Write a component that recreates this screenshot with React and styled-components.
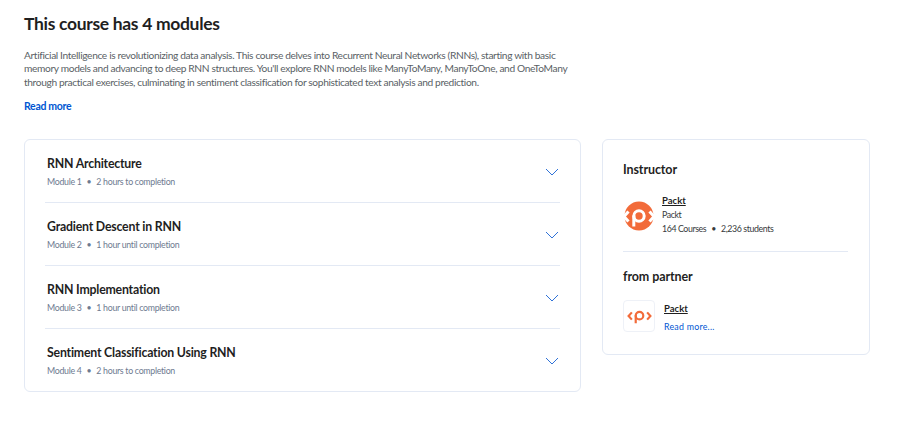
import React from 'react'
import styled, { createGlobalStyle } from 'styled-components'

const GlobalStyle = createGlobalStyle`
  html, body {
    margin: 0;
    padding: 0;
    background: #fff;
    font-family: Lato, "Noto Sans", sans-serif;
    color: #1f1f1f;
  }
`

const Page = styled.div`
  width: 900px;
  height: 423px;
  overflow: hidden;
  box-sizing: border-box;
  padding: 12px 30px 0 24px;
`

const Heading = styled.h2`
  margin: 0;
  font-size: 17.5px;
  line-height: 24px;
  font-weight: 700;
  letter-spacing: -0.32px;
  color: #1f1f1f;
`

const Summary = styled.p`
  margin: 13px 0 0;
  width: 552px;
  font-size: 10.2px;
  line-height: 13.4px;
  letter-spacing: -0.36px;
  color: #5a5f66;
`

const ReadMore = styled.a`
  display: block;
  margin-top: 10px;
  font-size: 10.5px;
  line-height: 14px;
  font-weight: 700;
  letter-spacing: -0.3px;
  color: #0056d2;
`

const Columns = styled.div`
  display: flex;
  align-items: flex-start;
  gap: 21px;
  margin-top: 26px;
`

const Card = styled.section`
  box-sizing: border-box;
  background: #fff;
  border: 1px solid #e3e9f4;
  border-radius: 6px;
`

const ModuleCard = styled(Card)`
  width: 557px;
  height: 253px;
  padding: 0 20px;
`

const ModuleRow = styled.div`
  display: flex;
  align-items: center;
  justify-content: space-between;
  height: 63px;
  box-sizing: border-box;
  padding: 2px 0 0 2px;
  border-bottom: 1px solid ${p => (p.$last ? 'transparent' : '#e3e9f4')};
`

const ModuleTitle = styled.div`
  font-size: 12.3px;
  line-height: 18px;
  font-weight: 700;
  letter-spacing: -0.2px;
  color: #1f1f1f;
`

const ModuleMeta = styled.div`
  margin-top: 2px;
  font-size: 8.8px;
  line-height: 14px;
  letter-spacing: -0.3px;
  color: #6e7a90;
`

const Dot = styled.span`
  margin: 0 5px;
`

const Chevron = styled.svg`
  width: 14px;
  height: 8px;
  margin: 0 1px 1px 0;
  fill: none;
  stroke: #2f72d8;
  stroke-width: 1;
`

const SideCard = styled(Card)`
  width: 268px;
  height: 216px;
  padding: 21px 21px 0 20px;
`

const SideTitle = styled.h3`
  margin: 0;
  font-size: 12.5px;
  line-height: 18px;
  font-weight: 700;
  letter-spacing: -0.1px;
  color: #1f1f1f;
`

const Person = styled.div`
  display: flex;
  gap: 7px;
  margin-top: 15px;
  padding-bottom: 16px;
  border-bottom: 1px solid #e3e9f4;
`

const Avatar = styled.svg`
  flex: none;
  width: 32px;
  height: 32px;
  margin-top: 6px;
`

const PersonName = styled.a`
  display: block;
  font-size: 9.5px;
  line-height: 14px;
  font-weight: 700;
  color: #1f1f1f;
  text-decoration: underline;
`

const PersonLine = styled.div`
  font-size: 8.8px;
  line-height: 13.5px;
  letter-spacing: -0.4px;
  color: #373a3c;
`

const PartnerHeading = styled(SideTitle)`
  margin-top: 16px;
`

const Partner = styled.div`
  display: flex;
  gap: 9px;
  margin-top: 14px;
`

const PartnerLogo = styled.div`
  flex: none;
  display: flex;
  align-items: center;
  justify-content: center;
  box-sizing: border-box;
  width: 32px;
  height: 32px;
  border: 1px solid #eef1f7;
  border-radius: 4px;
`

const PartnerMark = styled.svg`
  width: 25px;
  height: 16px;
`

const PartnerText = styled.div`
  padding-top: 2px;
`

const PartnerLink = styled.a`
  display: block;
  margin-top: 4px;
  font-size: 8.8px;
  line-height: 14px;
  letter-spacing: 0.25px;
  color: #0056d2;
`

const LogoMark = ({ color }) => (
  <g fill="none" stroke={color} strokeWidth="3">
    <path d="M6.5 6 L2 11 L6.5 16" />
    <path d="M27.5 6 L32 11 L27.5 16" />
    <circle cx="17" cy="10.5" r="5.2" />
    <path d="M11.8 10 V21" />
  </g>
)

const modules = [
  { title: 'RNN Architecture', meta: 'Module 1', time: '2 hours to completion' },
  { title: 'Gradient Descent in RNN', meta: 'Module 2', time: '1 hour until completion' },
  { title: 'RNN Implementation', meta: 'Module 3', time: '1 hour until completion' },
  { title: 'Sentiment Classification Using RNN', meta: 'Module 4', time: '2 hours to completion' },
]

export default function App() {
  return (
    <>
      <GlobalStyle />
      <Page>
        <Heading>This course has 4 modules</Heading>
        <Summary>
          Artificial Intelligence is revolutionizing data analysis. This course delves into Recurrent Neural Networks (RNNs), starting with basic
          memory models and advancing to deep RNN structures. You'll explore RNN models like ManyToMany, ManyToOne, and OneToMany
          through practical exercises, culminating in sentiment classification for sophisticated text analysis and prediction.
        </Summary>
        <ReadMore>Read more</ReadMore>
        <Columns>
          <ModuleCard>
            {modules.map((m, i) => (
              <ModuleRow key={m.title} $last={i === modules.length - 1}>
                <div>
                  <ModuleTitle>{m.title}</ModuleTitle>
                  <ModuleMeta>{m.meta}<Dot>•</Dot>{m.time}</ModuleMeta>
                </div>
                <Chevron viewBox="0 0 14 8"><path d="M1 1 L7 7 L13 1" /></Chevron>
              </ModuleRow>
            ))}
          </ModuleCard>
          <SideCard>
            <SideTitle>Instructor</SideTitle>
            <Person>
              <Avatar viewBox="0 0 32 32">
                <circle cx="16" cy="16" r="14.5" fill="#f26b3a" />
                <g transform="translate(-1 5.5)"><LogoMark color="#fff" /></g>
              </Avatar>
              <div>
                <PersonName>Packt</PersonName>
                <PersonLine>Packt</PersonLine>
                <PersonLine>164 Courses<Dot>•</Dot>2,236 students</PersonLine>
              </div>
            </Person>
            <PartnerHeading>from partner</PartnerHeading>
            <Partner>
              <PartnerLogo>
                <PartnerMark viewBox="0 0 34 22"><LogoMark color="#f26b3a" /></PartnerMark>
              </PartnerLogo>
              <PartnerText>
                <PersonName>Packt</PersonName>
                <PartnerLink>Read more...</PartnerLink>
              </PartnerText>
            </Partner>
          </SideCard>
        </Columns>
      </Page>
    </>
  )
}
